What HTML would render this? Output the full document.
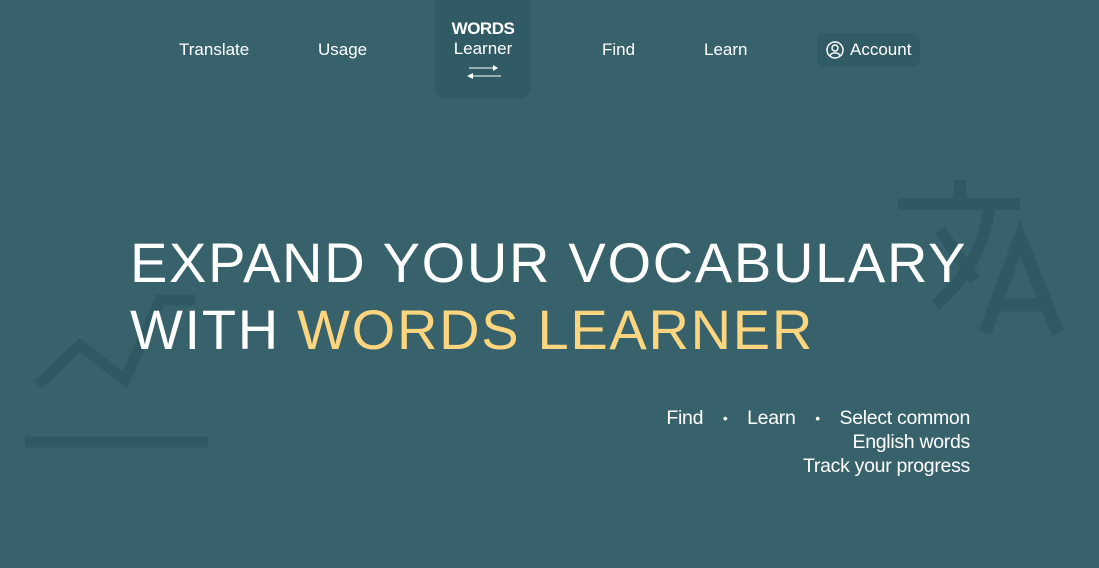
<!DOCTYPE html>
<html><head><meta charset="utf-8"><style>
html,body{margin:0;padding:0}
body{width:1099px;height:568px;background:#38626b;position:relative;overflow:hidden;font-family:"Liberation Sans",sans-serif;color:#fff}
.nav{position:absolute;top:40px;font-size:17px}
.logo{position:absolute;left:435px;top:0;width:96px;height:99px;background:#315b64;border-radius:0 0 11px 11px;text-align:center}
.acc{position:absolute;left:817px;top:33px;width:103px;height:34px;background:#315b64;border-radius:7px}
h1{position:absolute;left:130px;top:229px;margin:0;font-weight:normal;font-size:56px;line-height:67px;letter-spacing:1.7px;white-space:nowrap}
.sub{position:absolute;right:129px;top:406px;font-size:19.5px;line-height:24px;text-align:right;letter-spacing:-0.3px;white-space:nowrap}
.d{display:inline-block;width:44px;text-align:center;vertical-align:top;height:24px;line-height:24px;font-size:14px}
</style></head><body>
<svg width="1099" height="568" style="position:absolute;left:0;top:0">
<g fill="none" stroke="#2f5962">
<path d="M960 180 V200 M898 204 H1020 M990 204 C985 250 960 285 935 305 M940 230 L975 280" stroke-width="12"/>
<path d="M985 333 L1020 238 L1058 333 M995 305 H1048" stroke-width="13"/>
<path d="M38 385 L80 345 L125 380 L160 300 M155 300 H195" stroke-width="11"/>
<path d="M25 442 H208" stroke-width="11"/>
</g></svg>
<div class="nav" style="left:179px">Translate</div>
<div class="nav" style="left:318px">Usage</div>
<div class="logo"><div style="padding-top:19px;font-size:17px;line-height:20px;font-weight:bold;letter-spacing:-0.5px">WORDS</div><div style="font-size:17px;line-height:20px">Learner</div>
<svg width="40" height="16" style="margin-top:5px"><path d="M6 4H32M10 12H38" stroke="#fff" stroke-width="1"/><path d="M30 1L35 4L30 7Z M4 12L10 9V15Z" fill="#fff"/></svg></div>
<div class="nav" style="left:602px">Find</div>
<div class="nav" style="left:704px">Learn</div>
<div class="acc"><svg width="20" height="20" style="position:absolute;left:8px;top:7px"><circle cx="10" cy="10" r="8" fill="none" stroke="#fff" stroke-width="1.5"/><circle cx="10" cy="8" r="3" fill="none" stroke="#fff" stroke-width="1.5"/><path d="M5 15.5C7 12 13 12 15 15.5" fill="none" stroke="#fff" stroke-width="1.5"/></svg><span style="position:absolute;left:33px;top:7px;font-size:17px">Account</span></div>
<h1>EXPAND YOUR VOCABULARY<br>WITH <span style="color:#fdd57e">WORDS LEARNER</span></h1>
<div class="sub">Find<span class="d">•</span>Learn<span class="d">•</span>Select common<br>English words<br>Track your progress</div>
</body></html>
